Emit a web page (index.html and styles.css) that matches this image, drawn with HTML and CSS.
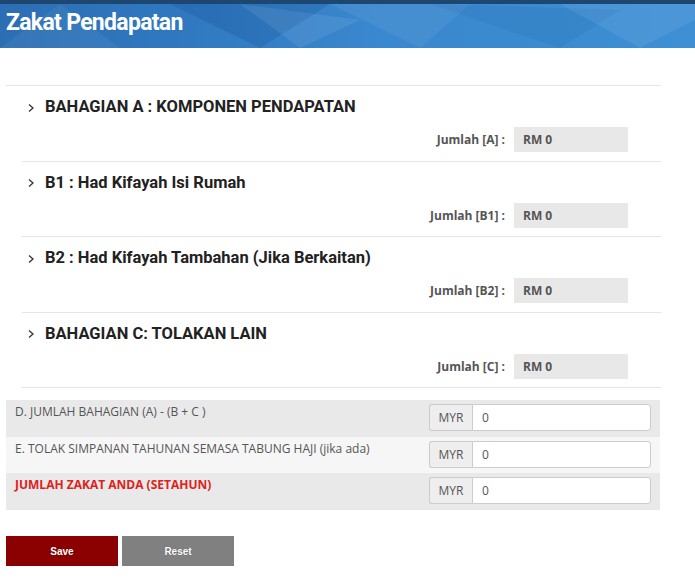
FILE: index.html
```html
<!DOCTYPE html>
<html lang="ms">
<head>
  <meta charset="UTF-8">
  <meta name="viewport" content="width=device-width, initial-scale=1.0">
  <title>Zakat Pendapatan</title>
  <link rel="stylesheet" href="styles.css">
</head>
<body>
  <header class="banner">
    <svg class="banner-art" viewBox="0 0 695 48" preserveAspectRatio="none">
      <polygon points="0,48 60,4 120,48" fill="#ffffff" opacity="0.05"/>
      <polygon points="170,4 260,48 330,4" fill="#0b3d7a" opacity="0.18"/>
      <polygon points="240,4 300,48 360,20" fill="#ffffff" opacity="0.08"/>
      <polygon points="330,4 420,48 470,4" fill="#ffffff" opacity="0.06"/>
      <polygon points="430,4 560,48 620,10" fill="#0b3d7a" opacity="0.08"/>
      <polygon points="560,4 640,48 695,20 695,4" fill="#ffffff" opacity="0.07"/>
    </svg>
    <h1>Zakat Pendapatan</h1>
  </header>

  <main class="form-wrap">
    <section class="part">
      <h2 class="part-title"><span class="chev"><svg viewBox="0 0 8 10"><polyline points="2,1.5 6,5 2,8.5"/></svg></span>BAHAGIAN A : KOMPONEN PENDAPATAN</h2>
      <div class="subtotal"><span class="subtotal-label">Jumlah [A] :</span><span class="subtotal-value">RM 0</span></div>
    </section>
    <section class="part">
      <h2 class="part-title"><span class="chev"><svg viewBox="0 0 8 10"><polyline points="2,1.5 6,5 2,8.5"/></svg></span>B1 : Had Kifayah Isi Rumah</h2>
      <div class="subtotal"><span class="subtotal-label">Jumlah [B1] :</span><span class="subtotal-value">RM 0</span></div>
    </section>
    <section class="part">
      <h2 class="part-title"><span class="chev"><svg viewBox="0 0 8 10"><polyline points="2,1.5 6,5 2,8.5"/></svg></span>B2 : Had Kifayah Tambahan (Jika Berkaitan)</h2>
      <div class="subtotal"><span class="subtotal-label">Jumlah [B2] :</span><span class="subtotal-value">RM 0</span></div>
    </section>
    <section class="part">
      <h2 class="part-title"><span class="chev"><svg viewBox="0 0 8 10"><polyline points="2,1.5 6,5 2,8.5"/></svg></span>BAHAGIAN C: TOLAKAN LAIN</h2>
      <div class="subtotal"><span class="subtotal-label">Jumlah [C] :</span><span class="subtotal-value">RM 0</span></div>
    </section>

    <div class="totals">
      <div class="total-row shade">
        <span class="total-label">D. JUMLAH BAHAGIAN (A) - (B + C )</span>
        <div class="money"><span class="addon">MYR</span><input class="money-input" type="text" value="0"></div>
      </div>
      <div class="total-row light">
        <span class="total-label">E. TOLAK SIMPANAN TAHUNAN SEMASA TABUNG HAJI (jika ada)</span>
        <div class="money"><span class="addon">MYR</span><input class="money-input" type="text" value="0"></div>
      </div>
      <div class="total-row shade">
        <span class="total-label zakat">JUMLAH ZAKAT ANDA (SETAHUN)</span>
        <div class="money"><span class="addon">MYR</span><input class="money-input" type="text" value="0"></div>
      </div>
    </div>

    <div class="actions">
      <button class="btn btn-save" type="button">Save</button>
      <button class="btn btn-reset" type="button">Reset</button>
    </div>
  </main>
</body>
</html>
```

FILE: styles.css
```css
body {
  margin: 0;
  background: #fff;
  font-family: "Open Sans", Arial, sans-serif;
  color: #555;
}

.banner {
  position: relative;
  height: 44px;
  border-top: 4px solid #1d4670;
  background: linear-gradient(90deg, #2c6eb3 0%, #2f78c0 25%, #3a88cf 55%, #3a8bd0 80%, #3f8fd4 100%);
  overflow: hidden;
}

.banner-art {
  position: absolute;
  top: -4px;
  left: 0;
  width: 100%;
  height: 48px;
}

.banner h1 {
  position: relative;
  margin: 0;
  padding: 3px 0 0 6px;
  font-family: Roboto, Arial, sans-serif;
  font-weight: 700;
  font-size: 23px;
  line-height: 32px;
  letter-spacing: -0.7px;
  color: #fff;
}

.form-wrap {
  margin: 37px 34px 0 6px;
  border-top: 1px solid #e6e6e6;
}

.part {
  margin-left: 16px;
  padding: 11px 0 8.5px;
  border-bottom: 1px solid #e6e6e6;
}

.part-title {
  display: flex;
  align-items: center;
  margin: 0;
  font-family: Roboto, Arial, sans-serif;
  font-weight: 700;
  font-size: 16.5px;
  line-height: 20px;
  color: #222;
}

.chev {
  display: inline-flex;
  width: 8px;
  height: 10px;
  margin: 1px 10px 0 5px;
}

.chev svg {
  width: 8px;
  height: 10px;
  fill: none;
  stroke: #333;
  stroke-width: 1.3;
}

.subtotal {
  display: flex;
  justify-content: flex-end;
  align-items: center;
  gap: 9px;
  margin: 10px 33px 0 0;
}

.subtotal-label {
  font-size: 12px;
  font-weight: 700;
  color: #555;
}

.subtotal-value {
  width: 105px;
  height: 25px;
  padding-left: 9px;
  background: #e8e8e8;
  font-size: 12px;
  font-weight: 700;
  line-height: 25px;
  color: #555;
}

.totals {
  margin: 12px 1px 0 0;
}

.total-row {
  display: flex;
  justify-content: space-between;
  align-items: flex-start;
  height: 36.7px;
  padding: 0 9px;
  box-sizing: border-box;
}

.total-row.shade {
  background: #e9e9e9;
}

.total-row.light {
  background: #f6f6f6;
}

.total-label {
  padding-top: 3px;
  font-size: 12px;
  line-height: 17px;
  color: #555;
}

.total-label.zakat {
  color: #e0211b;
  font-weight: 700;
}

.money {
  display: flex;
  margin-top: 4px;
  height: 27px;
}

.addon {
  width: 42px;
  border: 1px solid #ccc;
  border-right: none;
  border-radius: 3px 0 0 3px;
  background: #eee;
  font-size: 12px;
  line-height: 25px;
  text-align: center;
  color: #555;
}

.money-input {
  width: 179px;
  height: 27px;
  box-sizing: border-box;
  margin: 0;
  padding: 0 9px;
  border: 1px solid #ccc;
  border-radius: 0 3px 3px 0;
  font-family: "Open Sans", Arial, sans-serif;
  font-size: 12px;
  color: #555;
}

.actions {
  display: flex;
  gap: 4px;
  margin-top: 26px;
}

.btn {
  width: 112px;
  height: 30px;
  border: none;
  font-family: Arial, sans-serif;
  font-size: 10px;
  font-weight: 700;
  color: #fff;
  text-shadow: 0 0 1px rgba(0, 0, 0, 0.4);
}

.btn-save {
  background: #8b0000;
}

.btn-reset {
  background: #808080;
}
```
